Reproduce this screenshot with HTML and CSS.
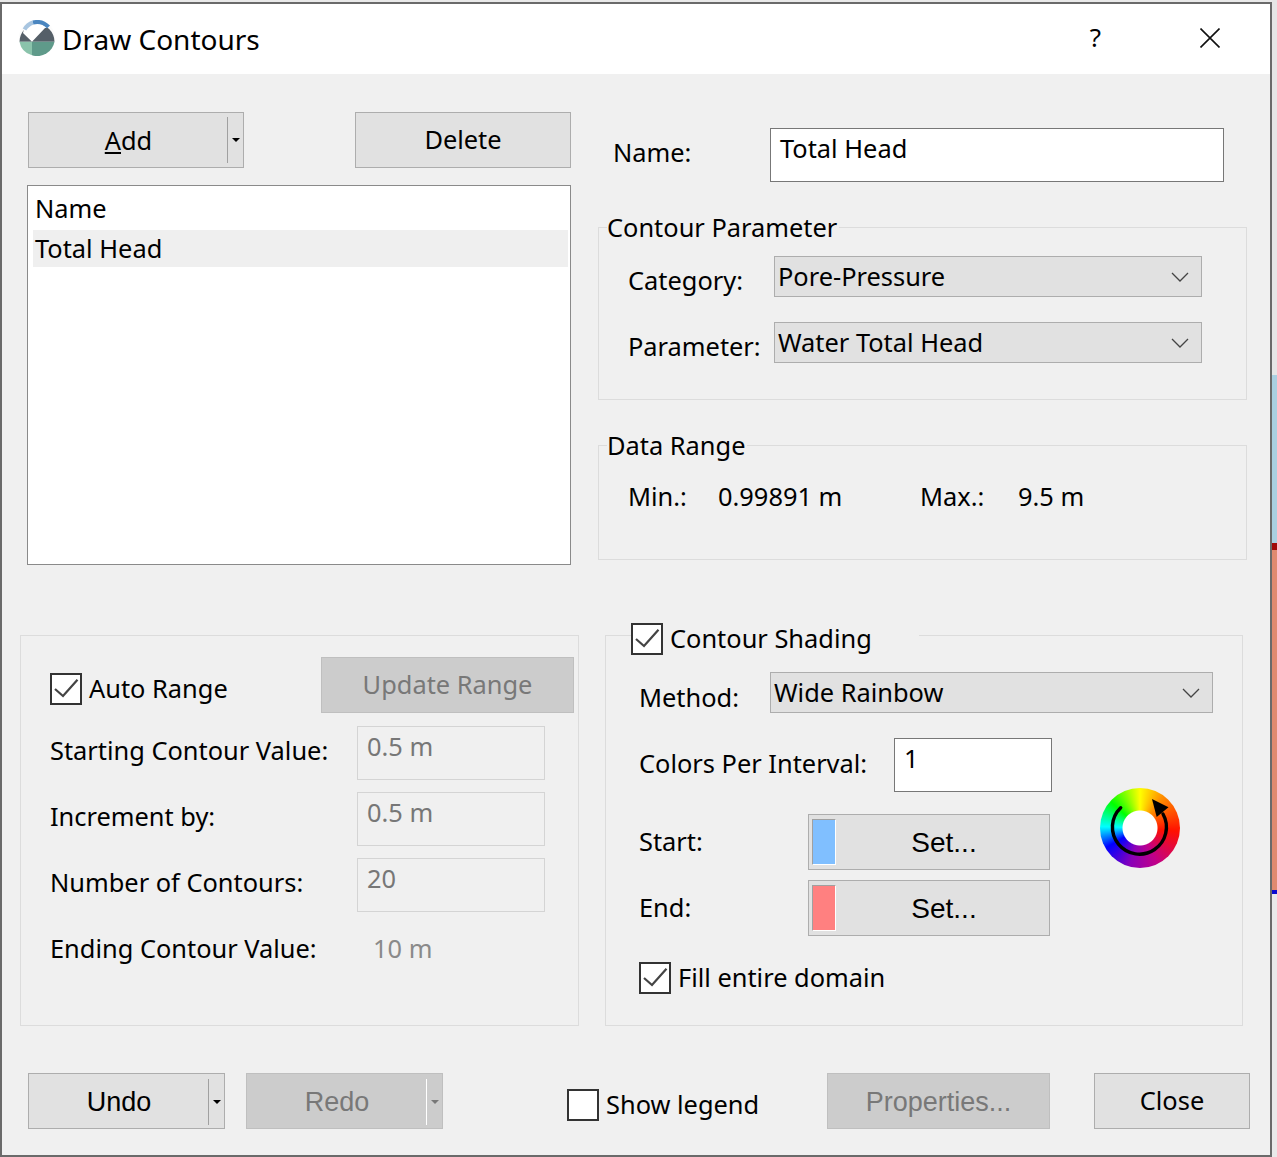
FILE: index.html
```html
<!DOCTYPE html>
<html lang="en">
<head>
    <meta charset="UTF-8">
    <title>Draw Contours</title>
    <link rel="stylesheet" href="styles.css">
</head>
<body>
<div class="window">
    <div class="titlebar">
        <svg class="logo" viewBox="0 0 36 36">
            <circle cx="18" cy="18" r="18" fill="#fbfbfb"/>
            <path d="M0.5 21.7 A17.5 17.5 0 0 1 35.5 21.7 Z" fill="#555f68"/>
            <path d="M0.5 21.7 H13 V35.3 A17.5 17.5 0 0 1 0.5 21.7 Z" fill="#8ac3ab"/>
            <path d="M13 21.7 H35.5 A17.5 17.5 0 0 1 13 35.3 Z" fill="#5f9a8a"/>
            <path d="M13 21.7 L4 13 L6 5 L14 1 L31 8 L26 8 Z" fill="#fff"/>
            <path d="M5.5 9.5 A16 16 0 0 1 14 2.5" fill="none" stroke="#a8c5e0" stroke-width="4"/>
            <path d="M14 2.5 A16 16 0 0 1 29.5 7" fill="none" stroke="#4a86c0" stroke-width="4"/>
        </svg>
        <span class="title-text">Draw Contours</span>
        <span class="title-help">?</span>
        <svg class="title-close" viewBox="0 0 20 20">
            <path d="M0.5 0.5 L19.5 19.5 M19.5 0.5 L0.5 19.5" stroke="#111" stroke-width="1.6" fill="none"/>
        </svg>
    </div>

    <div class="content">
        <div class="top">
            <div class="left-col">
                <div class="list-buttons">
                    <div class="btn split add-btn">
                        <span class="split-label"><u>A</u>dd</span>
                        <span class="split-arrow"></span>
                    </div>
                    <div class="btn delete-btn">Delete</div>
                </div>
                <div class="list">
                    <div class="list-row">Name</div>
                    <div class="list-row selected">Total Head</div>
                </div>
            </div>

            <div class="right-col">
                <div class="name-row">
                    <span class="label">Name:</span>
                    <div class="input">Total Head</div>
                </div>

                <fieldset class="group param-group">
                    <legend>Contour Parameter</legend>
                    <div class="param-grid">
                        <span class="label">Category:</span>
                        <div class="select">Pore-Pressure
                            <svg class="chevron" viewBox="0 0 18 10"><path d="M1 1 L9 9 L17 1"/></svg>
                        </div>
                        <span class="label">Parameter:</span>
                        <div class="select">Water Total Head
                            <svg class="chevron" viewBox="0 0 18 10"><path d="M1 1 L9 9 L17 1"/></svg>
                        </div>
                    </div>
                </fieldset>

                <fieldset class="group range-group">
                    <legend>Data Range</legend>
                    <div class="range-row">
                        <span>Min.:</span>
                        <span>0.99891 m</span>
                        <span>Max.:</span>
                        <span>9.5 m</span>
                    </div>
                </fieldset>
            </div>
        </div>

        <div class="bottom">
            <div class="group auto-group">
                <div class="auto-row">
                    <label class="check auto-check">
                        <svg class="checkbox" viewBox="0 0 28 28"><path d="M3 14 L11 21 L25.5 4.7"/></svg>
                        <span class="check-text">Auto Range</span>
                    </label>
                    <div class="btn disabled update-btn">Update Range</div>
                </div>
                <div class="value-grid">
                    <span class="label">Starting Contour Value:</span>
                    <div class="input readonly">0.5 m</div>
                    <span class="label">Increment by:</span>
                    <div class="input readonly">0.5 m</div>
                    <span class="label">Number of Contours:</span>
                    <div class="input readonly">20</div>
                    <span class="label">Ending Contour Value:</span>
                    <span class="label muted">10 m</span>
                </div>
            </div>

            <fieldset class="group shading-group">
                <legend class="shading-legend">
                    <label class="check">
                        <svg class="checkbox" viewBox="0 0 28 28"><path d="M3 14 L11 21 L25.5 4.7"/></svg>
                        <span class="check-text">Contour Shading</span>
                    </label>
                </legend>
                <div class="shading-body">
                    <div class="method-row">
                        <span class="label">Method:</span>
                        <div class="select">Wide Rainbow
                            <svg class="chevron" viewBox="0 0 18 10"><path d="M1 1 L9 9 L17 1"/></svg>
                        </div>
                    </div>
                    <div class="color-block">
                        <div class="color-rows">
                            <div class="interval-row">
                                <span class="label">Colors Per Interval:</span>
                                <div class="input">1</div>
                            </div>
                            <div class="set-row">
                                <span class="label">Start:</span>
                                <div class="btn arial set-btn">
                                    <span class="swatch swatch-start"></span>
                                    <span class="set-text">Set...</span>
                                </div>
                            </div>
                            <div class="set-row">
                                <span class="label">End:</span>
                                <div class="btn arial set-btn">
                                    <span class="swatch swatch-end"></span>
                                    <span class="set-text">Set...</span>
                                </div>
                            </div>
                        </div>
                        <div class="wheel">
                            <svg viewBox="0 0 80 80">
                                <path d="M20.7 19.7 A27 27 0 1 0 63 26" fill="none" stroke="#000" stroke-width="3.4" stroke-linecap="round"/>
                                <path d="M52 11 L68.5 19.3 L56.7 29 Z" fill="#000"/>
                            </svg>
                        </div>
                    </div>
                    <label class="check fill-check">
                        <svg class="checkbox" viewBox="0 0 28 28"><path d="M3 14 L11 21 L25.5 4.7"/></svg>
                        <span class="check-text">Fill entire domain</span>
                    </label>
                </div>
            </fieldset>
        </div>

        <div class="footer">
            <div class="btn split arial undo-btn">
                <span class="split-label">Undo</span>
                <span class="split-arrow"></span>
            </div>
            <div class="btn split arial disabled redo-btn">
                <span class="split-label">Redo</span>
                <span class="split-arrow"></span>
            </div>
            <label class="check legend-check">
                <svg class="checkbox" viewBox="0 0 28 28"></svg>
                <span class="check-text">Show legend</span>
            </label>
            <div class="btn arial disabled props-btn">Properties...</div>
            <div class="btn close-btn">Close</div>
        </div>
    </div>
</div>

<div class="backdrop">
    <span class="strip strip-grey"></span>
    <span class="strip strip-blue"></span>
    <span class="strip strip-red"></span>
    <span class="strip strip-salmon"></span>
    <span class="strip strip-line"></span>
</div>
</body>
</html>
```

FILE: styles.css
```css
* { box-sizing: border-box; }
html, body { margin: 0; height: 100%; }
body {
    display: flex;
    background-color: #e9e9e9;
    font-family: "Noto Sans", sans-serif;
    font-size: 25.4px;
    line-height: 36px;
    color: #000;
    overflow: hidden;
}

.window {
    width: 1272px;
    height: 1155px;
    margin-top: 2px;
    flex: none;
    border: 2px solid #6a6a6a;
    background-color: #f0f0f0;
}

.titlebar {
    height: 70px;
    display: flex;
    align-items: center;
    padding-left: 17px;
    background-color: #fff;
}
.logo { width: 36px; height: 36px; flex: none; margin-top: -2px; }
.title-text { margin-left: 7px; font-size: 28px; }
.title-help { margin-left: auto; margin-top: -5px; font-size: 26px; }
.title-close { width: 20px; height: 20px; margin: -3px 50px 0 99px; }

.content { padding-top: 38px; }

.top {
    display: grid;
    grid-template-columns: 543px 649px;
    column-gap: 27px;
    padding-left: 26px;
}
.list-buttons { display: flex; justify-content: space-between; }
.list {
    height: 380px;
    margin: 17px 0 0 -1px;
    padding: 5px 2px 0 5px;
    border: 1px solid #8a8a8a;
    background-color: #fff;
}
.list-row { height: 37px; padding-left: 2px; line-height: 34px; }
.list-row.selected { background-color: #efefef; margin-top: 2px; line-height: 36px; }

/* buttons */
.btn {
    height: 56px;
    display: flex;
    align-items: center;
    justify-content: center;
    border: 1px solid #adadad;
    background-color: #e1e1e1;
    line-height: 54px;
}
.btn.disabled { border-color: #bfbfbf; background-color: #cccccc; color: #787878; }
.arial { font-family: "Liberation Sans", Arial, sans-serif; font-size: 27px; padding-top: 2px; }
.split { justify-content: flex-start; }
.split-label { flex: 1; text-align: center; padding-left: 1px; }
.split-arrow {
    width: 16px;
    height: 46px;
    flex: none;
    display: flex;
    align-items: center;
    justify-content: center;
    border-left: 1px solid #a0a0a0;
}
.split-arrow::after {
    content: "";
    border-left: 4px solid transparent;
    border-right: 4px solid transparent;
    border-top: 4px solid #000;
}
.disabled .split-arrow { border-left-color: #fff; }
.disabled .split-arrow::after { border-top-color: #787878; }
.add-btn, .delete-btn { width: 216px; }
.delete-btn { padding-bottom: 2px; }

.label { padding-top: 6px; }
.muted { color: #8a8a8a; padding-left: 16px; }

.input {
    height: 54px;
    padding: 1px 9px 0;
    border: 1px solid #777;
    background-color: #fff;
}
.input.readonly { border-color: #d4d4d4; background-color: #f0f0f0; color: #777; }

.select {
    height: 41px;
    display: flex;
    align-items: center;
    justify-content: space-between;
    padding: 0 12px 2px 3px;
    border: 1px solid #adadad;
    background-color: #e1e1e1;
}
.chevron { width: 18px; height: 10px; flex: none; margin-top: 2px; }
.chevron path { fill: none; stroke: #444; stroke-width: 1.3; }

.right-col { padding-top: 16px; }
.name-row {
    display: grid;
    grid-template-columns: 157px 454px;
    padding-left: 15px;
}

.group { margin: 0; padding: 0; min-width: 0; border: 1px solid #dcdcdc; }
.group legend { margin-left: 8px; padding: 0 2px 0 0; height: 36px; }

.param-group { margin-top: 27px; padding: 11px 0 35px 0; }
.param-grid {
    display: grid;
    grid-template-columns: 146px 428px;
    row-gap: 24px;
    padding-left: 29px;
}
.range-group { margin-top: 27px; padding: 15px 0 45px 0; }
.range-row { display: grid; grid-template-columns: 90px 202px 98px auto; padding-left: 29px; }

.bottom {
    display: grid;
    grid-template-columns: 559px 638px;
    column-gap: 26px;
    align-items: end;
    margin-top: 55px;
    padding-left: 18px;
}
.auto-group { height: 391px; padding: 21px 4px 0 29px; }
.auto-row { display: flex; }
.auto-check { width: 271px; padding-top: 8px; }
.update-btn { width: 253px; padding-bottom: 2px; }
.value-grid {
    display: grid;
    grid-template-columns: 307px 188px;
    row-gap: 12px;
    margin-top: 13px;
}

.check { display: flex; align-items: center; gap: 7px; }
.check-text { padding-bottom: 2px; }
.checkbox {
    width: 32px;
    height: 32px;
    flex: none;
    border: 2px solid #333;
    background-color: #fff;
}
.checkbox path { fill: none; stroke: #444; stroke-width: 2.2; }

.shading-group { height: 406px; padding: 22px 0 0 0; }
.group .shading-legend { margin-left: 25px; padding-right: 47px; height: 30px; }
.shading-legend .check { height: 36px; margin-top: 1px; }
.shading-body { padding-left: 33px; }
.shading-body .label { padding-top: 7px; }

.method-row { display: grid; grid-template-columns: 131px 443px; }
.color-block { display: flex; margin-top: 23px; }
.color-rows { width: 411px; }
.interval-row { display: grid; grid-template-columns: 255px 158px; }
.set-row { display: grid; grid-template-columns: 169px 242px; margin-top: 10px; }
.shading-body .set-row .label { padding-top: 9px; }
.interval-row + .set-row { margin-top: 22px; }
.set-btn { justify-content: flex-start; padding-left: 3px; font-size: 28px; }
.swatch {
    width: 24px;
    height: 46px;
    flex: none;
    margin-top: -2px;
    border: 1px solid #a0a0a0;
    border-bottom: 1px solid #fff;
    border-right: 1px solid #fff;
}
.swatch-start { background-color: #80bfff; }
.swatch-end { background-color: #ff8080; }
.set-text { flex: 1; text-align: center; padding-left: 3px; }

.wheel {
    width: 80px;
    height: 80px;
    flex: none;
    margin: 50px 0 0 50px;
    border-radius: 50%;
    background:
        radial-gradient(circle, #fff 0 17px, transparent 18px),
        conic-gradient(#ffff00, #ff9000 35deg, #ff1000 95deg, #c0008a 155deg, #8a00b8 195deg, #0000ff 240deg, #00ffff 272deg, #00ff00 312deg, #ffff00);
}
.wheel svg { display: block; width: 80px; height: 80px; }

.fill-check { margin-top: 23px; }

.footer { display: flex; align-items: center; margin-top: 47px; padding-left: 26px; }
.undo-btn, .redo-btn { width: 197px; }
.redo-btn { margin-left: 21px; }
.legend-check { margin-left: 124px; width: 260px; margin-top: 8px; }
.props-btn { width: 223px; }
.close-btn { width: 156px; margin-left: 44px; padding-bottom: 2px; }

/* what shows of the window behind the dialog */
.backdrop { flex: 1; display: flex; flex-direction: column; }
.strip-grey { height: 375px; background-color: #e6e6e6; }
.strip-blue { height: 168px; background-color: #a9cfe0; }
.strip-red { height: 7px; background-color: #a00808; }
.strip-salmon { height: 340px; background-color: #e08a70; }
.strip-line { height: 4px; background-color: #0a0ad0; }
```
